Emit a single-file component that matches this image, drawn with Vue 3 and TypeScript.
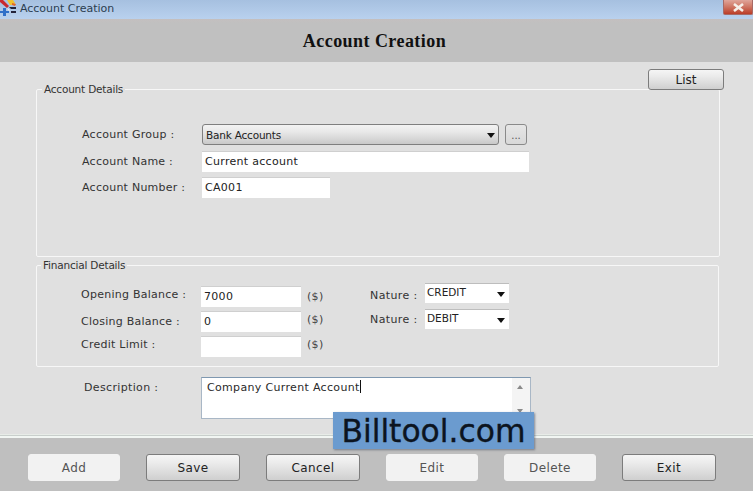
<script setup lang="ts">
const groupRows = [
  { label: 'Account Name :', value: 'Current account', cls: 'wide' },
  { label: 'Account Number :', value: 'CA001', cls: 'short' },
]
const buttons = [
  { text: 'Add', enabled: false },
  { text: 'Save', enabled: true },
  { text: 'Cancel', enabled: true },
  { text: 'Edit', enabled: false },
  { text: 'Delete', enabled: false },
  { text: 'Exit', enabled: true },
]
</script>

<template>
  <div class="window">
    <div class="titlebar">
      <svg class="appicon" width="17" height="16" viewBox="0 0 17 16">
        <path d="M0 0 L3 0 L9 6 L7 8 L0 2 Z" fill="#c8282e" />
        <path d="M7 0 L13 0 L15 3 L14 5 L10 5 Z" fill="#f0c230" />
        <path d="M12 3 L16 4 L15 6 L12 5 Z" fill="#e2662a" />
        <path d="M0 11 H3 V8 H6 V11 H9 V13 H6 V16 H3 V13 H0 Z" fill="#2f6fc8" />
        <path d="M9 7 L16 7 L16 9 L11 9 Z M11 11 L16 11 L16 13 L11 13 Z" fill="#23233a" />
        <path d="M7 8 L10 10 L9 11 Z" fill="#f4f4f4" />
      </svg>
      <span class="wintitle">Account Creation</span>
      <div class="close">
        <svg width="13" height="9" viewBox="0 0 13 9">
          <path d="M2 1 L11 8 M11 1 L2 8" stroke="#f6efe9" stroke-width="2.6" />
        </svg>
      </div>
    </div>

    <div class="header"><h1>Account Creation</h1></div>

    <div class="content">
      <button class="btn list">List</button>

      <fieldset class="group details">
        <legend>Account Details</legend>
        <div class="row first">
          <span class="label">Account Group :</span>
          <div class="combo">
            <span>Bank Accounts</span>
            <i class="arrow"></i>
          </div>
          <div class="more">...</div>
        </div>
        <div v-for="r in groupRows" :key="r.label" class="row">
          <span class="label">{{ r.label }}</span>
          <div class="input" :class="r.cls">{{ r.value }}</div>
        </div>
      </fieldset>

      <fieldset class="group financial">
        <legend>Financial Details</legend>
        <div class="fin">
          <div class="fin-left">
            <div class="fin-row">
              <span class="label lift">Opening Balance :</span>
              <div class="input amount">7000</div>
              <span class="unit">($)</span>
            </div>
            <div class="fin-row">
              <span class="label">Closing Balance :</span>
              <div class="input amount">0</div>
              <span class="unit lift">($)</span>
            </div>
            <div class="fin-row">
              <span class="label lift">Credit Limit :</span>
              <div class="input amount"></div>
              <span class="unit lift">($)</span>
            </div>
          </div>
          <div class="fin-right">
            <div class="nat-row">
              <span class="nat-label drop">Nature :</span>
              <div class="select"><span>CREDIT</span><i class="arrow"></i></div>
            </div>
            <div class="nat-row">
              <span class="nat-label">Nature :</span>
              <div class="select"><span>DEBIT</span><i class="arrow"></i></div>
            </div>
          </div>
        </div>
      </fieldset>

      <div class="desc">
        <span class="desc-label">Description :</span>
        <div class="textarea">
          <span class="desc-text">Company Current Account</span><span class="caret"></span>
          <div class="scroll">
            <i class="up"></i>
            <i class="down"></i>
          </div>
        </div>
      </div>
    </div>

    <div class="footer">
      <button
        v-for="b in buttons"
        :key="b.text"
        class="btn action"
        :class="{ off: !b.enabled }"
      >{{ b.text }}</button>
    </div>

    <div class="watermark">Billtool.com</div>
  </div>
</template>

<style>
html, body { margin: 0; padding: 0; overflow: hidden; }
</style>

<style scoped>
.window {
  position: relative;
  width: 753px;
  height: 491px;
  display: flex;
  flex-direction: column;
  overflow: hidden;
  background: #e0e0e0;
  font-family: "DejaVu Sans", Verdana, sans-serif;
  font-size: 11px;
  color: #2a2a2a;
}
.titlebar {
  height: 19px;
  flex: none;
  display: flex;
  align-items: center;
  background: linear-gradient(#a6c0e0, #b9d1ee);
  position: relative;
}
.appicon { margin-right: 3px; flex: none; margin-top: -3px; }
.wintitle { font-size: 11px; letter-spacing: -0.02px; color: #2c3e50; margin-top: -3px; }
.close {
  position: absolute;
  right: 0;
  top: 0;
  width: 30px;
  height: 15px;
  box-sizing: border-box;
  background: linear-gradient(#e0a59a, #d07a68 45%, #bb3d28);
  border: 1px solid #a86a66;
  border-top: 0;
  border-radius: 0 0 2px 2px;
  display: flex;
  align-items: center;
  justify-content: center;
}
.header {
  height: 43px;
  flex: none;
  padding: 2px 4px 0 0;
  box-sizing: border-box;
  background: linear-gradient(#c4bfbf 0, #c0c0c0 4px);
  display: flex;
  align-items: center;
  justify-content: center;
}
.header h1 {
  margin: 0;
  font-family: "Liberation Serif", "Times New Roman", serif;
  font-size: 18px;
  font-weight: bold;
  letter-spacing: 0.45px;
  color: #111;
}
.content {
  position: relative;
  flex: 1;
  padding: 0 33px 0 36px;
  border-bottom: 1px solid #e8ece8;
  background: #e0e0e0;
}
.list {
  position: absolute;
  top: 7px;
  right: 29px;
  width: 76px;
  height: 21px;
  z-index: 1;
}
.btn {
  box-sizing: border-box;
  padding: 0;
  font-family: "DejaVu Sans", Verdana, sans-serif;
  font-size: 12px;
  color: #222;
  border: 1px solid #7c7c7c;
  border-radius: 3px;
  background: linear-gradient(#f5f5f5, #ececec 30%, #cfcfcf);
}
.group {
  margin: 0;
  padding: 0;
  box-sizing: border-box;
  border: 1px solid #f7f7f7;
  border-radius: 2px;
  min-inline-size: 0;
}
.group legend {
  padding: 0 2px;
  margin-left: -40px;
  font-size: 10.5px;
  letter-spacing: -0.2px;
  color: #333;
  line-height: 13px;
}
.details {
  height: 174px;
  margin-top: 21px;
  padding: 28px 0 0 45px;
}
.financial {
  height: 108px;
  margin-top: 2px;
  margin-right: 1px;
  padding: 14px 0 0 44px;
}
.row {
  display: flex;
  align-items: center;
  height: 21px;
  margin-bottom: 5px;
}
.row.first { margin-bottom: 6px; }
.label {
  width: 120px;
  flex: none;
  letter-spacing: 0.25px;
  color: #333;
}
.lift { margin-top: -4px; }
.drop { margin-top: 4px; }
.combo {
  box-sizing: border-box;
  width: 297px;
  height: 21px;
  border: 1px solid #7f7f7f;
  border-radius: 3px;
  background: linear-gradient(#f3f3f3, #e9e9e9 35%, #c9c9c9);
  display: flex;
  align-items: center;
  justify-content: space-between;
  padding: 0 3px;
  font-size: 10.5px;
  letter-spacing: -0.2px;
  color: #222;
}
.arrow {
  display: block;
  width: 0;
  height: 0;
  margin-top: 1px;
  border-left: 4px solid transparent;
  border-right: 4px solid transparent;
  border-top: 5px solid #111;
}
.more {
  box-sizing: border-box;
  margin-left: 6px;
  width: 22px;
  height: 21px;
  border: 1px solid #8a8a8a;
  border-radius: 3px;
  background: linear-gradient(#e6e6e6, #d8d8d8);
  text-align: center;
  line-height: 21px;
  font-size: 10px;
  color: #555;
}
.input {
  box-sizing: border-box;
  height: 21px;
  background: #fff;
  border-top: 1px solid #cfcfcf;
  padding: 0 3px;
  line-height: 19px;
  letter-spacing: 0.3px;
  color: #222;
}
.wide { width: 327px; }
.short { width: 128px; }
.amount { width: 100px; flex: none; }
.fin { display: flex; }
.fin-left { width: 289px; flex: none; }
.fin-right { margin-top: -3px; }
.fin-row {
  display: flex;
  align-items: center;
  height: 20px;
  margin-bottom: 5px;
}
.unit { margin-left: 6px; color: #444; letter-spacing: 0.3px; }
.nat-row {
  display: flex;
  align-items: center;
  height: 20px;
  margin-bottom: 6px;
}
.nat-label { width: 55px; flex: none; letter-spacing: 0.4px; color: #333; }
.select {
  box-sizing: border-box;
  width: 84px;
  height: 20px;
  background: #fff;
  border-top: 1px solid #bdbdbd;
  display: flex;
  align-items: center;
  justify-content: space-between;
  padding: 0 4px 0 2px;
  font-size: 10.5px;
  color: #222;
}
.select span { margin-top: -3px; }
.desc {
  display: flex;
  margin-top: 10px;
  padding-left: 48px;
}
.desc-label { width: 117px; flex: none; letter-spacing: 0.35px; color: #333; margin-top: 4px; }
.textarea {
  position: relative;
  box-sizing: border-box;
  width: 330px;
  height: 42px;
  background: #fff;
  border: 1px solid #a9b7c6;
  border-top-color: #7f98b0;
  padding: 2px 0 0 5px;
  line-height: 16px;
  letter-spacing: 0.33px;
}
.caret {
  display: inline-block;
  width: 1px;
  height: 13px;
  background: #111;
  vertical-align: -2px;
}
.scroll {
  position: absolute;
  right: 0;
  top: 0;
  bottom: 0;
  width: 18px;
  background: #f4f4f4;
}
.up, .down {
  position: absolute;
  left: 5px;
  width: 0;
  height: 0;
  border-left: 3.5px solid transparent;
  border-right: 3.5px solid transparent;
}
.up { top: 7px; border-bottom: 4px solid #8a8a8a; }
.down { bottom: 5px; border-top: 4px solid #8a8a8a; }
.footer {
  height: 56px;
  flex: none;
  box-sizing: border-box;
  background: linear-gradient(#c9cfcc 0 1px, #f2f6f3 1px 3px, #bfbfbf 3px);
  padding: 19px 0 0 28px;
  display: flex;
  gap: 26px;
}
.action {
  width: 94px;
  height: 27px;
  letter-spacing: 0.4px;
  font-size: 12px;
}
.action.off {
  width: 92px;
  border-color: #f2f2f2;
  background: #f2f2f2;
  color: #555;
}
.watermark {
  position: absolute;
  left: 333px;
  top: 412px;
  width: 201px;
  height: 37px;
  background: #6b9bcf;
  box-shadow: 1px 1px 2px rgba(60, 70, 90, 0.55);
  color: #0c1420;
  font-size: 31.4px;
  -webkit-text-stroke: 0.35px #0c1420;
  line-height: 38px;
  text-align: center;
  white-space: nowrap;
}
</style>
